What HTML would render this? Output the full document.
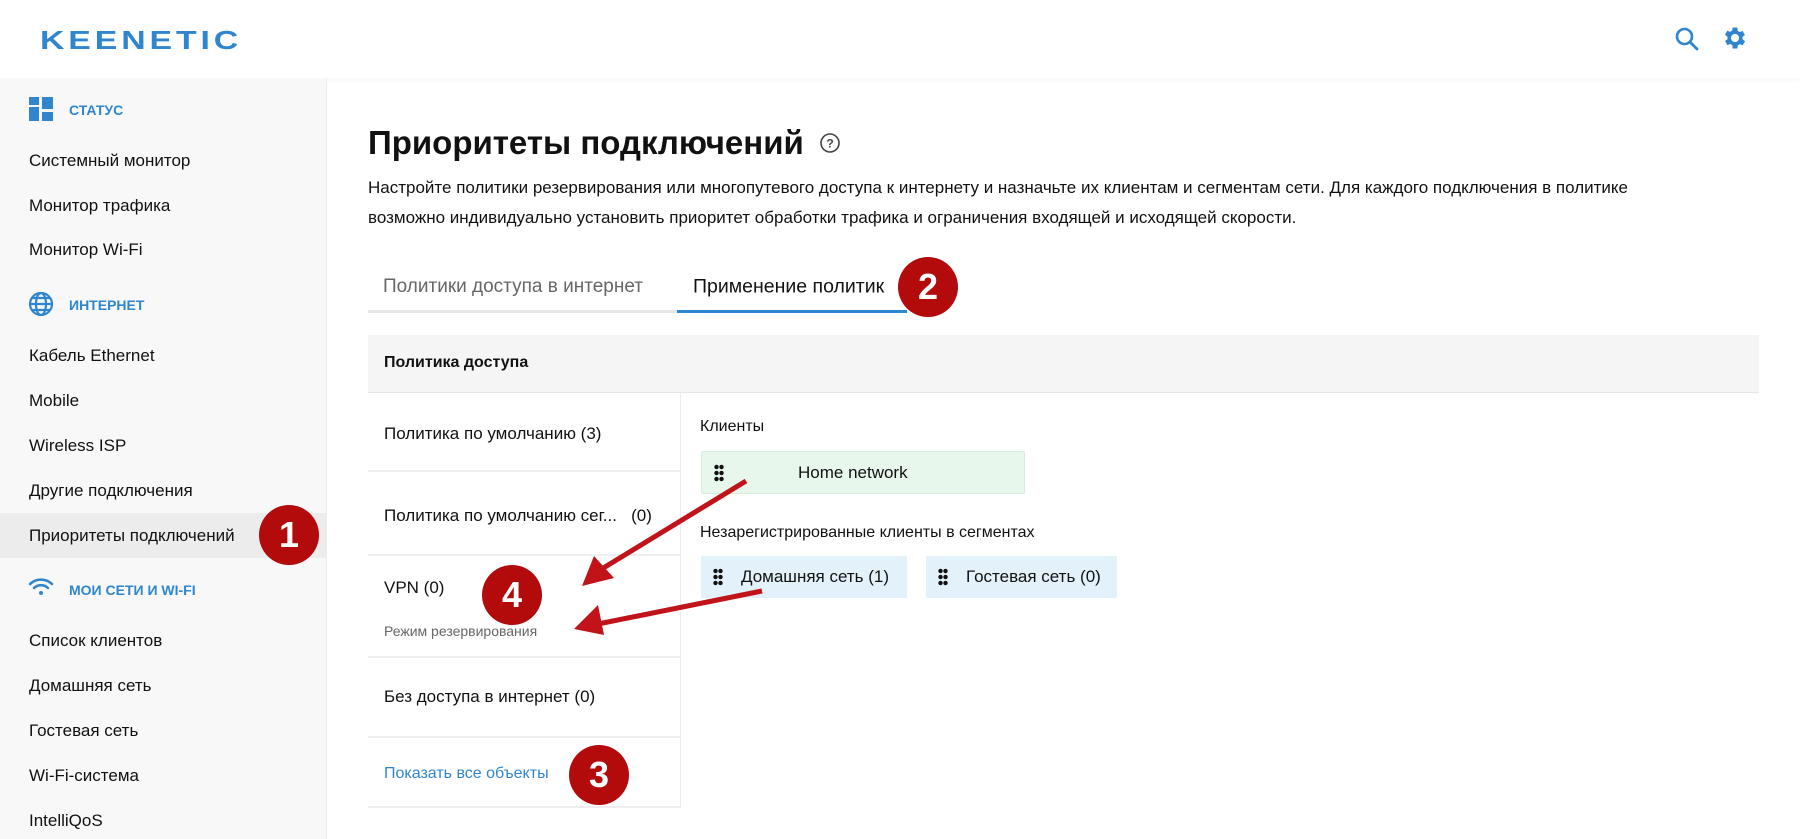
<!DOCTYPE html>
<html><head><meta charset="utf-8"><style>
*{margin:0;padding:0;box-sizing:border-box}
body{width:1800px;height:839px;overflow:hidden;background:#fff;font-family:"Liberation Sans",sans-serif;color:#111;position:relative}
.abs{position:absolute;white-space:nowrap}
.side{position:absolute;left:0;top:78px;width:327px;height:761px;background:#f8f8f8;border-right:1px solid #ececec}
.si{position:absolute;left:29px;font-size:17px;transform:translateY(-50%)}
.sh{position:absolute;left:69px;font-size:14px;font-weight:bold;color:#2f86cf;transform:translateY(-50%)}
.badge{position:absolute;width:60px;height:60px;border-radius:50%;background:#b30a0c;color:#fff;font-weight:bold;font-size:36px;text-align:center;line-height:60px;transform:translate(-50%,-50%)}
.t{transform:translateY(-50%)}
.dots{position:absolute;left:12px;top:50%;transform:translateY(-50%);width:10px;height:18px;background:radial-gradient(circle,#111 2px,transparent 2.4px) 0 0/5px 6px}
</style></head><body>
<div class="abs" style="left:0;top:0;width:1800px;height:78px;background:#fff;box-shadow:0 2px 6px rgba(0,0,0,.04)"></div>
<div class="abs" style="left:40px;top:25px;font-size:26px;font-weight:900;color:#2f86cf;letter-spacing:3px;transform:scaleX(1.3);transform-origin:left">KEENETIC</div>
<svg class="abs" style="left:1674px;top:26px" width="26" height="26" viewBox="0 0 26 26"><circle cx="10.5" cy="10.5" r="7.5" fill="none" stroke="#2f86cf" stroke-width="2.6"/><path d="M16 16l7 7" stroke="#2f86cf" stroke-width="2.8" stroke-linecap="round"/></svg>
<svg class="abs" style="left:1721px;top:24px" width="28" height="28" viewBox="0 0 24 24"><path fill="#2f86cf" d="M19.4 13a7.5 7.5 0 0 0 0-2l2.1-1.6-2-3.5-2.5 1a7 7 0 0 0-1.7-1L15 3h-4l-.4 2.7a7 7 0 0 0-1.7 1l-2.5-1-2 3.5L6.6 11a7.5 7.5 0 0 0 0 2l-2.1 1.6 2 3.5 2.5-1a7 7 0 0 0 1.7 1L11 21h4l.4-2.7a7 7 0 0 0 1.7-1l2.5 1 2-3.5zM13 15.5a3.5 3.5 0 1 1 0-7 3.5 3.5 0 0 1 0 7z" transform="translate(-1 0)"/></svg>

<div class="side"></div>
<div class="abs" style="left:0;top:513px;width:327px;height:45px;background:#ececec"></div>
<svg class="abs" style="left:29px;top:97px" width="24" height="24"><rect x="0" y="0" width="10" height="8" fill="#2f86cf"/><rect x="0" y="10" width="10" height="14" fill="#2f86cf"/><rect x="13" y="0" width="11" height="12" fill="#2f86cf"/><rect x="13" y="15" width="11" height="9" fill="#2f86cf"/></svg>
<div class="sh" style="top:110px">СТАТУС</div>
<svg class="abs" style="left:28px;top:291px" width="26" height="26" viewBox="0 0 26 26" fill="none" stroke="#2f86cf" stroke-width="2.2"><circle cx="13" cy="13" r="11"/><ellipse cx="13" cy="13" rx="5" ry="11"/><path d="M2 13h22M4 7h18M4 19h18"/></svg>
<div class="sh" style="top:305px">ИНТЕРНЕТ</div>
<svg class="abs" style="left:28px;top:577px" width="26" height="20" viewBox="0 0 26 20" fill="none" stroke="#2f86cf" stroke-width="2.6" stroke-linecap="round"><path d="M2 7a16 16 0 0 1 22 0M6 11a10 10 0 0 1 14 0"/><circle cx="13" cy="16" r="2" fill="#2f86cf" stroke="none"/></svg>
<div class="sh" style="top:590px">МОИ СЕТИ И WI-FI</div>
<div class="si" style="top:161px">Системный монитор</div>
<div class="si" style="top:206px">Монитор трафика</div>
<div class="si" style="top:250px">Монитор Wi-Fi</div>
<div class="si" style="top:356px">Кабель Ethernet</div>
<div class="si" style="top:401px">Mobile</div>
<div class="si" style="top:446px">Wireless ISP</div>
<div class="si" style="top:491px">Другие подключения</div>
<div class="si" style="top:536px">Приоритеты подключений</div>
<div class="si" style="top:641px">Список клиентов</div>
<div class="si" style="top:686px">Домашняя сеть</div>
<div class="si" style="top:731px">Гостевая сеть</div>
<div class="si" style="top:776px">Wi-Fi-система</div>
<div class="si" style="top:821px">IntelliQoS</div>

<div class="abs t" style="left:368px;top:143px;font-size:33px;font-weight:bold">Приоритеты подключений</div>
<svg class="abs" style="left:819px;top:132px" width="22" height="22" viewBox="0 0 22 22"><circle cx="11" cy="11" r="9" fill="none" stroke="#444" stroke-width="1.6"/><text x="11" y="15.5" font-size="12" text-anchor="middle" fill="#444" font-family="Liberation Sans" font-weight="bold">?</text></svg>
<div class="abs t" style="left:368px;top:188px;font-size:17px">Настройте политики резервирования или многопутевого доступа к интернету и назначьте их клиентам и сегментам сети. Для каждого подключения в политике</div>
<div class="abs t" style="left:368px;top:218px;font-size:17px">возможно индивидуально установить приоритет обработки трафика и ограничения входящей и исходящей скорости.</div>

<div class="abs t" style="left:383px;top:287px;font-size:19px;color:#666">Политики доступа в интернет</div>
<div class="abs t" style="left:693px;top:287px;font-size:19.5px;color:#111">Применение политик</div>
<div class="abs" style="left:368px;top:310px;width:309px;height:3px;background:#e8e8e8"></div>
<div class="abs" style="left:677px;top:310px;width:230px;height:3px;background:#2f86cf"></div>

<div class="abs" style="left:368px;top:335px;width:1391px;height:58px;background:#f5f5f5;border-bottom:1px solid #e6e6e6"></div>
<div class="abs t" style="left:384px;top:363px;font-size:16px;font-weight:bold">Политика доступа</div>
<div class="abs" style="left:680px;top:393px;width:1px;height:415px;background:#ececec"></div>
<div class="abs" style="left:368px;top:470px;width:312px;height:2px;background:#eee"></div>
<div class="abs" style="left:368px;top:554px;width:312px;height:2px;background:#eee"></div>
<div class="abs" style="left:368px;top:656px;width:312px;height:2px;background:#eee"></div>
<div class="abs" style="left:368px;top:736px;width:312px;height:2px;background:#eee"></div>
<div class="abs" style="left:368px;top:806px;width:312px;height:2px;background:#eee"></div>
<div class="abs t" style="left:384px;top:434px;font-size:17px">Политика по умолчанию (3)</div>
<div class="abs t" style="left:384px;top:516px;font-size:17px">Политика по умолчанию сег...&nbsp;&nbsp; (0)</div>
<div class="abs t" style="left:384px;top:588px;font-size:17px">VPN (0)</div>
<div class="abs t" style="left:384px;top:631px;font-size:14px;color:#666">Режим резервирования</div>
<div class="abs t" style="left:384px;top:697px;font-size:17px">Без доступа в интернет (0)</div>
<div class="abs t" style="left:384px;top:774px;font-size:16px;color:#2f86cf">Показать все объекты</div>

<div class="abs t" style="left:700px;top:427px;font-size:16px">Клиенты</div>
<div class="abs" style="left:701px;top:451px;width:324px;height:43px;background:#e7f7ec;border:1px solid #d6eedd;border-radius:2px"><div class="dots"></div><div class="abs t" style="left:96px;top:50%;font-size:17px">Home network</div></div>
<div class="abs t" style="left:700px;top:533px;font-size:16px">Незарегистрированные клиенты в сегментах</div>
<div class="abs" style="left:701px;top:556px;width:206px;height:42px;background:#e3f1fb;border-radius:2px"><div class="dots"></div><div class="abs t" style="left:40px;top:50%;font-size:17px">Домашняя сеть (1)</div></div>
<div class="abs" style="left:926px;top:556px;width:191px;height:42px;background:#e3f1fb;border-radius:2px"><div class="dots"></div><div class="abs t" style="left:40px;top:50%;font-size:17px">Гостевая сеть (0)</div></div>

<svg class="abs" style="left:0;top:0" width="1800" height="839"><g fill="#c0141a" stroke="#c0141a"><path d="M746 481L600 570" stroke-width="5"/><path d="M582 586l12-30 20 22z" stroke="none"/><path d="M762 591L598 624" stroke-width="5"/><path d="M574 629l24-24 6 30z" stroke="none"/></g></svg>

<div class="badge" style="left:289px;top:535px">1</div>
<div class="badge" style="left:928px;top:287px">2</div>
<div class="badge" style="left:599px;top:775px">3</div>
<div class="badge" style="left:512px;top:595px">4</div>
</body></html>
